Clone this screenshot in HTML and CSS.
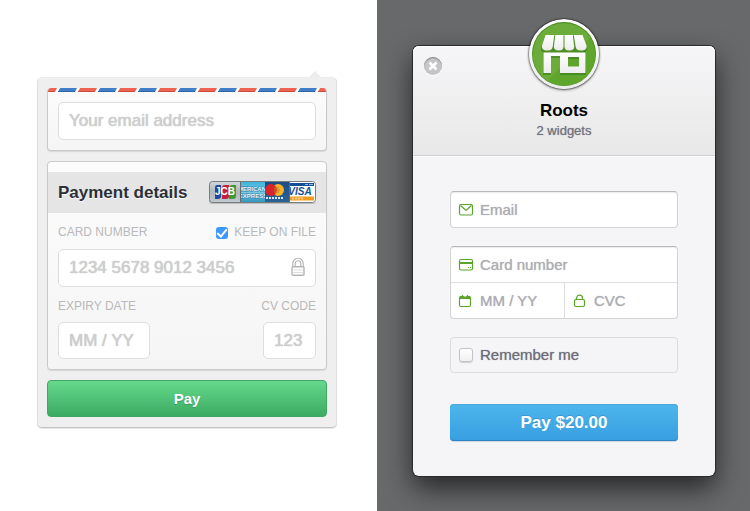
FILE: index.html
```
<!DOCTYPE html>
<html lang="en">
<head>
<meta charset="utf-8">
<meta name="viewport" content="width=device-width, initial-scale=1">
<title>Payment forms</title>
<link rel="stylesheet" href="styles.css">
</head>
<body>
<main class="page">
  <section class="pane pane-light">
    <form class="popover">
      <div class="card mail-card">
        <svg class="airmail" aria-hidden="true">
          <defs>
            <pattern id="stripes" x="-1" width="40" height="4" patternUnits="userSpaceOnUse">
              <rect width="40" height="4" fill="#fff"/>
              <path d="M-7 0H10L8 4H-9zM33 0H50L48 4H31z" fill="#ee6352"/>
              <path d="M13 0H30L28 4H11z" fill="#427fc9"/>
              <path d="M-9 3H8V4H-9zM31 3H48V4H31z" fill="#c94f42"/>
              <path d="M11 3H28V4H11z" fill="#2f66a8"/>
            </pattern>
          </defs>
          <rect width="100%" height="4" fill="url(#stripes)"/>
        </svg>
        <input class="box" type="email" aria-label="Your email address" placeholder="Your email address">
      </div>

      <div class="card details-card">
        <header class="details-head">
          <h2>Payment details</h2>
          <svg class="brands" width="107" height="23" viewBox="0 0 107 23" role="img" aria-label="JCB, American Express, MasterCard, Visa">
            <defs>
              <linearGradient id="silver" x2="0" y2="1"><stop stop-color="#d5d9dc"/><stop offset=".5" stop-color="#aeb7bd"/><stop offset="1" stop-color="#c3cacf"/></linearGradient>
              <linearGradient id="amex" x2="0" y2="1"><stop stop-color="#36b4dc"/><stop offset=".55" stop-color="#7cc8e2"/><stop offset="1" stop-color="#2b8fb9"/></linearGradient>
              <linearGradient id="navy" x2="0" y2="1"><stop stop-color="#1f4a82"/><stop offset="1" stop-color="#2a6498"/></linearGradient>
              <clipPath id="rounded"><rect width="107" height="22" rx="3"/></clipPath>
            </defs>
            <rect y="1" width="107" height="22" rx="3" fill="#bdbdbd"/>
            <g clip-path="url(#rounded)">
              <rect width="32" height="22" fill="url(#silver)"/>
              <rect x="31" width="25" height="22" fill="url(#amex)"/>
              <rect x="56" width="25" height="22" fill="url(#navy)"/>
              <rect x="81" width="26" height="22" fill="#fff"/>
              <path d="M8 4h4v11q0 3-3 3H6V7q0-3 2-3z" fill="#1c4a9c"/>
              <path d="M16 4h4v11q0 3-3 3h-4V7q0-3 3-3z" fill="#c31f3f"/>
              <path d="M23 4h4v11q0 3-3 3h-4V7q0-3 3-3z" fill="#3f9a2d"/>
              <text class="jcb" x="16" y="14" text-anchor="middle">JCB</text>
              <svg x="32" width="24" height="22">
                <text class="amex" x="11" y="10" text-anchor="middle">MERICAN</text>
                <text class="amex" x="12" y="17" text-anchor="middle">EXPRESS</text>
              </svg>
              <circle cx="69" cy="9" r="6" fill="#f5b327"/>
              <circle cx="62" cy="9" r="6" fill="#d9242c"/>
              <path d="M65 7h5M65 9h6M65 11h5" stroke="#c97a22"/>
              <path d="M57 17h18" stroke="#dbe6f2" stroke-width="2" stroke-dasharray="2 1"/>
              <path d="M81 3.500h24" stroke="#174f96" stroke-width="3"/>
              <path d="M96 3.500h3m1 0h4" stroke="#8db5df"/>
              <path d="M81 17.500h24" stroke="#f19a1c" stroke-width="4"/>
              <path d="M83 17.500h12" stroke="#fbd393" stroke-width="2" stroke-dasharray="2 1"/>
              <svg x="81" width="25" height="22"><text class="visa" x="10" y="14" text-anchor="middle">VISA</text></svg>
              <path d="M31.500 0v22M80.500 0v22" stroke="#626b72"/>
            </g>
            <rect x=".5" y=".5" width="106" height="21" rx="3" fill="none" stroke="#787d80"/>
          </svg>
        </header>

        <div class="details-body">
          <div class="row caption-row">
            <label class="caption" for="number">CARD NUMBER</label>
            <label class="keep"><input class="blue-check" type="checkbox" checked><span class="caption">KEEP ON FILE</span></label>
          </div>
          <div class="number">
            <input class="box" id="number" inputmode="numeric" placeholder="1234 5678 9012 3456">
            <svg class="lock" width="14" height="19" viewBox="0 0 14 19" aria-hidden="true">
              <path d="M3 9V5.500a4 4 0 0 1 8 0V9" fill="none" stroke="#b5b5b5" stroke-width="3.600"/>
              <path d="M3 9V5.500a4 4 0 0 1 8 0V9" fill="none" stroke="#fff" stroke-width="1.300"/>
              <rect x="1" y="8.700" width="12" height="8.600" rx="1" fill="#fff" stroke="#b5b5b5" stroke-width="1.400"/>
              <path d="M2 12h10M2 14.500h10" stroke="#dedede"/>
            </svg>
          </div>
          <div class="row">
            <div class="stack expiry">
              <label class="caption" for="expiry">EXPIRY DATE</label>
              <input class="box" id="expiry" placeholder="MM / YY">
            </div>
            <div class="stack code">
              <label class="caption" for="code">CV CODE</label>
              <input class="box" id="code" placeholder="123">
            </div>
          </div>
        </div>
      </div>
      <button class="pay-green" type="submit">Pay</button>
    </form>
  </section>

  <section class="pane pane-dark">
    <form class="modal">
      <header class="modal-head">
        <button class="close" type="button" aria-label="Close">
          <svg width="18" height="18" viewBox="0 0 18 18" aria-hidden="true"><path d="M5.500 5.500l7 7M12.500 5.500l-7 7" stroke="#fff" stroke-width="2.800"/></svg>
        </button>
        <svg class="logo" width="70" height="70" viewBox="1 1 70 70" aria-hidden="true">
          <defs>
            <linearGradient id="ring" x2="0" y2="1"><stop stop-color="#fff"/><stop offset="1" stop-color="#ececec"/></linearGradient>
            <linearGradient id="shop" x2="0" y2="1"><stop stop-color="#fff"/><stop offset="1" stop-color="#ececec"/></linearGradient>
            <clipPath id="disc"><circle cx="36" cy="36" r="31"/></clipPath>
          </defs>
          <circle cx="36" cy="36" r="35" fill="url(#ring)"/>
          <circle cx="36" cy="36" r="32" fill="#4b8d20"/>
          <circle cx="36" cy="36.500" r="31.300" fill="#60a62d"/>
          <g clip-path="url(#disc)"><path d="M0 0H72V10L10 72H0z" fill="#fff" opacity=".07"/></g>
          <g fill="#3f7c1b" transform="translate(0 1)" opacity=".6">
            <path d="M17 17H55L59 29q0 4-3 4H16q-4 0-3-4z"/>
            <path fill-rule="evenodd" d="M15 32H58V56H32V39H23V56H15zM40 40V48H51V40z"/>
          </g>
          <path fill="url(#shop)" fill-rule="evenodd" d="M15.500 34.500H57.500V55H32V38H23V55H15.500zM40 39V48.500H51V39z"/>
          <g fill="url(#shop)">
            <path d="M17.500 17H26.300L24.800 28q-.5 4.500-5 4.500H18q-4.500-.5-4-5z"/>
            <path d="M27.300 17H35.500V28.500q0 4-4.600 4-5.200 0-5-4z"/>
            <path d="M36.500 17H44.800L46.200 28.500q.2 4-5 4-4.700 0-4.700-4z"/>
            <path d="M45.800 17H54.500L58.500 27.500q.5 4.500-4 5h-2q-4.500 0-5-4.500z"/>
          </g>
        </svg>
        <h1>Roots</h1>
        <p>2 widgets</p>
      </header>

      <div class="modal-body">
        <label class="field single">
          <svg width="14" height="12" viewBox="0 0 14 12" aria-hidden="true"><rect x=".5" y=".5" width="13" height="10.500" rx="1.500"/><path d="M1.500 1.500L7 6.500l5.500-5"/></svg>
          <input type="email" aria-label="Email" placeholder="Email">
        </label>

        <div class="group">
          <label class="field wide">
            <svg width="14" height="12" viewBox="0 0 14 12" aria-hidden="true"><rect x=".5" y=".5" width="13" height="10.500" rx="1.500"/><path d="M1 4h12" stroke-width="2"/><path d="M9 8.500h1M11 8.500h1"/></svg>
            <input inputmode="numeric" aria-label="Card number" placeholder="Card number">
          </label>
          <label class="field">
            <svg width="14" height="12" viewBox="0 0 14 12" aria-hidden="true"><rect x=".5" y="1.500" width="11" height="10" rx="1.500"/><path d="M1 2.500h10" stroke-width="3"/><path d="M3.500 0v2M8.500 0v2"/><path d="M4.800 1h2.400" stroke="#fff" stroke-width="1"/></svg>
            <input aria-label="Expiry date" placeholder="MM / YY">
          </label>
          <label class="field cvc">
            <svg width="14" height="12" viewBox="0 0 14 12" aria-hidden="true"><rect x="1.500" y="4.500" width="10" height="7" rx="1.500"/><path d="M3.500 4.500V3.200a3 3 0 0 1 6 0v1.300"/></svg>
            <input aria-label="CVC" placeholder="CVC">
          </label>
        </div>

        <label class="remember"><input type="checkbox"><span>Remember me</span></label>
        <button class="pay-blue" type="submit">Pay $20.00</button>
      </div>
    </form>
  </section>
</main>
</body>
</html>
```
FILE: styles.css
```
* {
  box-sizing: border-box;
}

body {
  margin: 0;
  font-family: "Liberation Sans", Arial, sans-serif;
}

h1, h2, p {
  margin: 0;
}

input, button {
  min-width: 0;
  margin: 0;
  font-family: inherit;
}

button {
  cursor: pointer;
}

.page {
  display: grid;
  grid-template-columns: 377fr 373fr;
  min-height: 100vh;
}

/* Light popover */

.pane-light {
  padding: 77px 40px 80px 37px;
  background: #fff;
}

.popover {
  position: relative;
  display: flex;
  flex-direction: column;
  gap: 10px;
  max-width: 320px;
  margin: 0 auto;
  padding: 10px 9px;
  background: #efefef;
  border: 1px solid #dedede;
  border-top-color: #ececec;
  border-bottom-color: #c4c4c4;
  border-radius: 5px;
  box-shadow: 0 1px 1px #e4e4e4;
}

.popover::before {
  content: "";
  position: absolute;
  right: 14px;
  bottom: 100%;
  border: 7px solid transparent;
  border-top: 0;
  border-bottom-color: #ececec;
}

.card {
  overflow: hidden;
  background: linear-gradient(#fcfcfc, #f5f5f5);
  border: 1px solid #cacaca;
  border-radius: 4px;
  box-shadow: 0 1px 1px #d8d8d8;
}

.mail-card {
  position: relative;
  padding: 14px 10px 10px;
  border-top: 0;
}

.airmail {
  position: absolute;
  top: 0;
  left: 0;
  width: 100%;
  height: 4px;
}

.box {
  display: block;
  width: 100%;
  height: 38px;
  padding: 0 10px;
  color: #555;
  font-size: 17px;
  background: #fff;
  border: 1px solid #dedede;
  border-radius: 5px;
}

.box::placeholder {
  color: #cecece;
  opacity: 1;
  text-shadow: 0 0 1px #cecece, 0 0 1px #cecece;
}

.details-card {
  padding-top: 10px;
}

.details-head {
  display: flex;
  align-items: center;
  justify-content: space-between;
  height: 41px;
  padding: 0 10px;
  background: #e5e5e5;
}

.details-head h2 {
  color: #2b3036;
  font-size: 17px;
  line-height: 20px;
  text-shadow: 0 1px 0 #fff;
}

.jcb {
  fill: #fff;
  font-size: 10px;
  font-weight: bold;
}

.amex {
  fill: #eaf8fd;
  stroke: #2787b2;
  stroke-width: 1px;
  paint-order: stroke;
  font-size: 6px;
  font-weight: bold;
}

.visa {
  fill: #174f96;
  font-size: 10px;
  font-style: italic;
  font-weight: bold;
}

.details-body {
  padding: 10px;
}

.row {
  display: flex;
  align-items: flex-start;
  justify-content: space-between;
}

.caption-row {
  align-items: center;
  margin-bottom: 7px;
}

.caption {
  color: #b9b9b9;
  font-size: 12px;
  line-height: 19px;
}

.keep {
  display: flex;
  align-items: center;
  gap: 6px;
}

.blue-check {
  appearance: none;
  width: 12px;
  height: 12px;
  border-radius: 3px;
  background: #3b99fc;
}

.blue-check:checked {
  display: grid;
  place-items: center;
}

.blue-check:checked::before {
  content: "";
  width: 4px;
  height: 8px;
  border: solid #fff;
  border-width: 0 2px 2px 0;
  transform: translateY(-1px) rotate(40deg);
}

.number {
  position: relative;
  margin-bottom: 10px;
}

.lock {
  position: absolute;
  top: 9px;
  right: 11px;
}

.stack {
  display: flex;
  flex-direction: column;
  gap: 6px;
}

.stack .box {
  height: 37px;
}

.expiry .box {
  width: 92px;
}

.code {
  align-items: flex-end;
}

.code .box {
  width: 53px;
}

.pay-green {
  height: 37px;
  color: #fff;
  font-size: 15px;
  font-weight: bold;
  text-shadow: 0 1px 1px #3b9a59;
  background: linear-gradient(#66d98c, #3bab62);
  border: 1px solid #3fa963;
  border-radius: 4px;
}

/* Dark backdrop and modal */

.pane-dark {
  padding: 46px 35px 35px 36px;
  background: #68696b;
}

.modal {
  max-width: 340px;
  margin: 0 auto;
  background: #f5f5f7;
  border-radius: 6px;
  box-shadow: 0 0 0 1px #29292a, 0 12px 28px rgba(0, 0, 0, .65);
}

.modal-head {
  position: relative;
  display: flex;
  flex-direction: column;
  align-items: center;
  height: 110px;
  padding-top: 55px;
  background: linear-gradient(#f6f6f8, #e8e8e8);
  border-bottom: 1px solid #d0d0d2;
  border-radius: 6px 6px 0 0;
  box-shadow: inset 0 1px 0 #fff, 0 1px 0 #fff;
}

.modal-head h1 {
  font-size: 17px;
  line-height: 20px;
}

.modal-head p {
  color: #72727c;
  font-size: 13px;
  line-height: 20px;
  text-shadow: 0 0 1px #8f8f98;
}

.logo {
  position: absolute;
  top: -27px;
  left: 50%;
  margin-left: -35px;
  border-radius: 50%;
  box-shadow: 0 0 1px 1px rgba(0, 0, 0, .3), 0 1px 3px rgba(0, 0, 0, .5);
}

.close {
  position: absolute;
  top: 11px;
  left: 11px;
  width: 18px;
  height: 18px;
  padding: 0;
  background: #c5c5c7;
  border: 0;
  border-radius: 50%;
  box-shadow: inset 0 1px 1px #858587, 0 1px 0 #fff;
}

.close svg {
  display: block;
}

.modal-body {
  display: flex;
  flex-direction: column;
  padding: 35px 37px;
}

.field {
  display: flex;
  align-items: center;
  gap: 7px;
  height: 35px;
  padding: 0 8px;
}

.field svg {
  flex: none;
  overflow: visible;
  fill: none;
  stroke: #5ba42b;
  stroke-width: 1.2;
}

.field input {
  width: 100%;
  height: 30px;
  padding: 0;
  color: #555;
  font-size: 15px;
  background: none;
  border: 0;
}

.field input::placeholder {
  color: #adadb2;
  opacity: 1;
  text-shadow: 0 0 1px #b4b4b9;
}

.single, .group {
  background: #fff;
  border: 1px solid #d4d4d7;
  border-top-color: #b9b9bb;
  border-radius: 4px;
  box-shadow: inset 0 1px 1px #ececee;
}

.single {
  height: 37px;
  margin-bottom: 18px;
}

.group {
  display: grid;
  grid-template-columns: 1fr 1fr;
  margin-bottom: 18px;
}

.wide {
  grid-column: 1 / -1;
  height: 36px;
  border-bottom: 1px solid #dedee0;
}

.cvc {
  border-left: 1px solid #dedee0;
}

.remember {
  display: flex;
  align-items: center;
  gap: 7px;
  height: 36px;
  margin-bottom: 31px;
  padding: 0 8px;
  color: #6d6d77;
  font-size: 15px;
  line-height: 18px;
  text-shadow: 0 0 1px #8f8f98;
  border: 1px solid #dcdcdf;
  border-radius: 4px;
}

.remember input {
  appearance: none;
  width: 14px;
  height: 14px;
  background: linear-gradient(#fff, #f0f0f0);
  border: 1px solid #c4c4c7;
  border-radius: 3px;
  box-shadow: 0 1px 1px #d0d0d2;
}

.remember input:checked {
  background: #3b99fc;
}

.pay-blue {
  height: 37px;
  color: #fff;
  font-size: 17px;
  font-weight: bold;
  text-shadow: 0 -1px 0 #3a96cd;
  background: linear-gradient(#4cb6ec, #389fe0);
  border: 0;
  border-radius: 4px;
  box-shadow: inset 0 1px 0 #4aa9da, inset 0 -1px 0 #2c80c4, 0 1px 1px #cfd6e4;
}
```
